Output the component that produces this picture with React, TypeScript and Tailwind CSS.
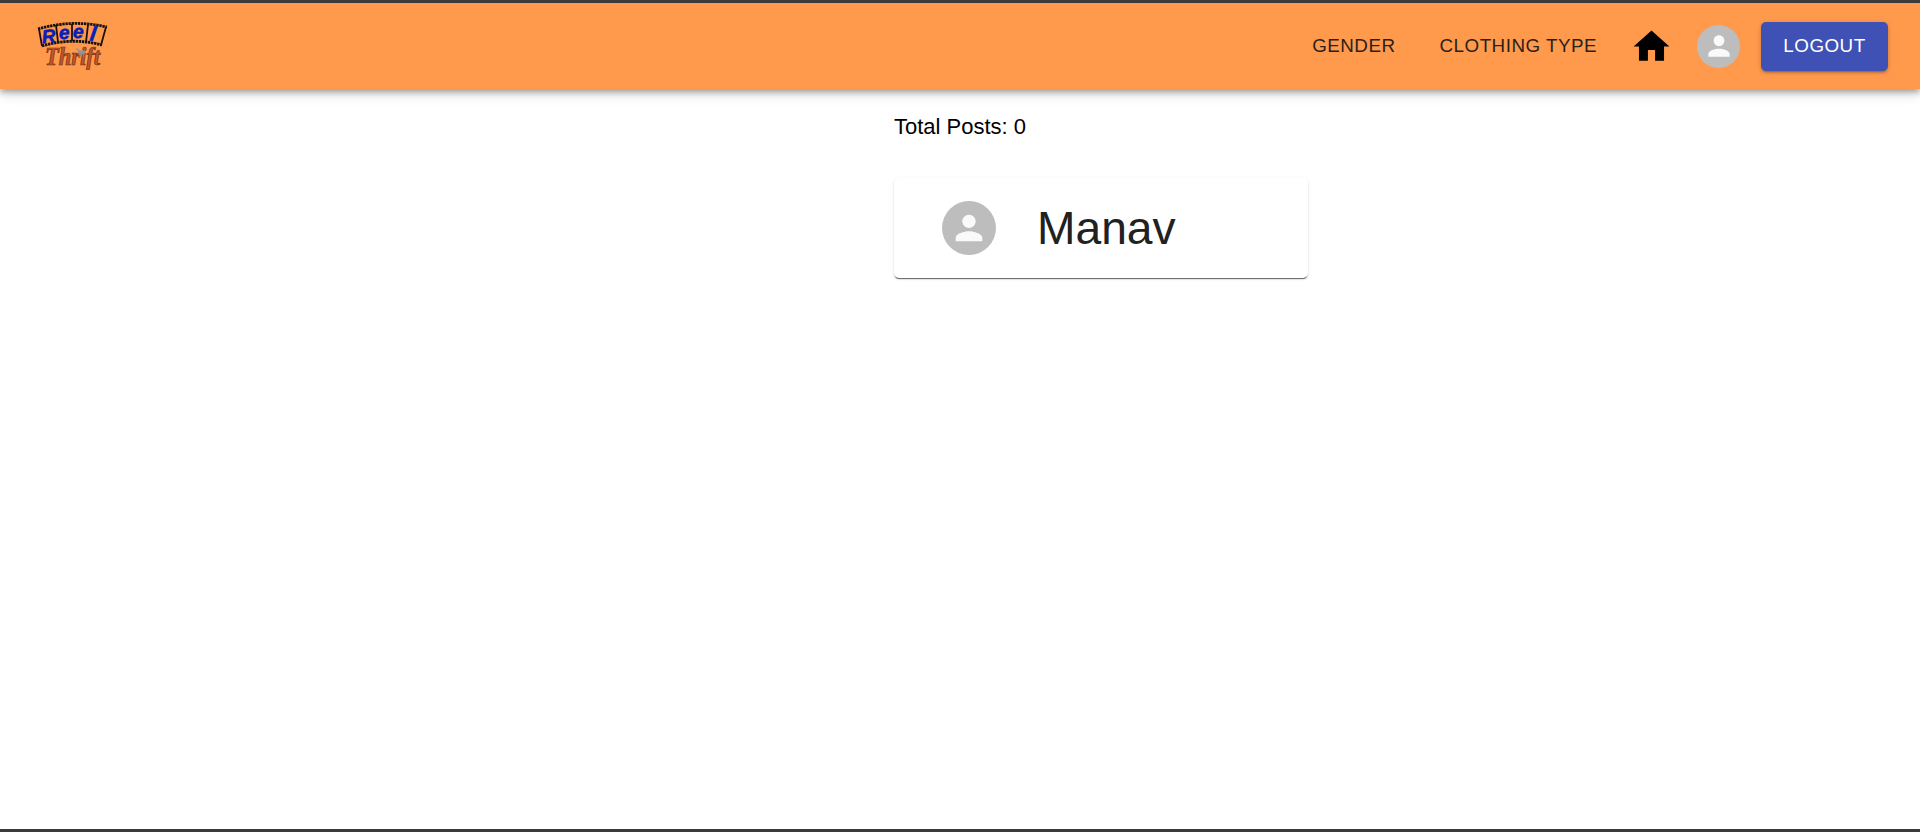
import React from "react";

function Logo() {
  return (
    <svg width="74" height="48" viewBox="36 22 74 48" className="block">
      {/* film strip */}
      <path d="M38 29 Q72 19 107 27" fill="none" stroke="#1a120a" strokeWidth="2.8" strokeDasharray="2.4 0.7" />
      <path d="M42 46 Q72 37 102 45" fill="none" stroke="#1a120a" strokeWidth="2.8" strokeDasharray="2.4 0.7" />
      <path d="M39 29 L42 46 M56 25 L58 42 M72 24 L72 41 M88 25 L86 42 M106 27 L101 45" stroke="#1a120a" strokeWidth="1.8" fill="none" />
      <g fill="#0a1eb8" stroke="#0a1eb8" strokeWidth="0.6" fontFamily="'Liberation Sans', sans-serif" fontStyle="italic" fontWeight="700">
        <text x="42" y="43" fontSize="19" transform="rotate(-6 48 38)">R</text>
        <text x="59" y="39" fontSize="19" transform="rotate(-3 64 35)">e</text>
        <text x="73" y="38" fontSize="19" transform="rotate(3 78 34)">e</text>
        <text x="90" y="41" fontSize="21" transform="rotate(8 94 35)">l</text>
      </g>
      {/* wordmark */}
      <text
        x="45"
        y="65"
        fontSize="25"
        fontFamily="'Liberation Serif', serif"
        fontStyle="italic"
        fontWeight="700"
        textLength="55"
        lengthAdjust="spacingAndGlyphs"
        fill="#c2562a"
        stroke="#6b2c14"
        strokeWidth="0.7"
      >
        Thrift
      </text>
      {/* tiny cart */}
      <path d="M76 49 L78 49 L79 54 L84 54 L85 51 L78.5 51" fill="#8f9398" stroke="#8f9398" strokeWidth="1" />
      <circle cx="79.5" cy="56" r="0.8" fill="#8f9398" />
      <circle cx="83.5" cy="56" r="0.8" fill="#8f9398" />
    </svg>
  );
}

function PersonAvatar({ size, icon }: { size: string; icon: string }) {
  return (
    <div className={`flex items-center justify-center rounded-full bg-[#bdbdbd] shrink-0 ${size}`}>
      <svg viewBox="0 0 24 24" className={`${icon} fill-[#fafafa]`}>
        <path d="M12 12c2.21 0 4-1.79 4-4s-1.79-4-4-4-4 1.79-4 4 1.79 4 4 4zm0 2c-2.67 0-8 1.34-8 4v2h16v-2c0-2.66-5.33-4-8-4z" />
      </svg>
    </div>
  );
}

export default function App() {
  return (
    <div className="h-[832px] flex flex-col bg-white border-y-[3px] border-[#3a3a3a] font-['Liberation_Sans',Arial,sans-serif] overflow-hidden">
      <header className="h-[86px] shrink-0 flex items-center justify-between bg-[#ff9a4d] pl-[36px] pr-[32px] shadow-[0_3px_6px_rgba(0,0,0,0.3),0_5px_12px_rgba(0,0,0,0.14)]">
        <Logo />
        <div className="flex items-center">
          <button className="text-[18.8px] tracking-[0.5px] text-[#2a2119] uppercase">Gender</button>
          <button className="ml-[44px] text-[18.8px] tracking-[0.5px] text-[#2a2119] uppercase">Clothing Type</button>
          <svg viewBox="0 0 24 24" className="ml-[33px] w-[43px] h-[43px] fill-black">
            <path d="M10 20v-6h4v6h5v-8h3L12 3 2 12h3v8z" />
          </svg>
          <div className="ml-[24px]">
            <PersonAvatar size="w-[43px] h-[43px]" icon="w-[32px] h-[32px]" />
          </div>
          <button className="ml-[21px] h-[49px] w-[127px] rounded-[5px] bg-[#3f51b5] text-white text-[18.8px] tracking-[0.5px] uppercase shadow-[0_3px_2px_-2px_rgba(0,0,0,0.2),0_2px_3px_rgba(0,0,0,0.14),0_1px_6px_rgba(0,0,0,0.12)]">
            Logout
          </button>
        </div>
      </header>
      <main className="w-[414px] ml-[894px] pt-[25px]">
        <p className="text-[22px] leading-[25px] text-black">Total Posts: 0</p>
        <div className="mt-[39px] h-[100px] flex items-center pl-[48px] bg-white rounded-[5px] shadow-[0_2px_1px_-1px_rgba(0,0,0,0.5),0_1px_1px_rgba(0,0,0,0.14),0_1px_3px_rgba(0,0,0,0.12)]">
          <PersonAvatar size="w-[54px] h-[54px]" icon="w-[40px] h-[40px]" />
          <span className="ml-[41px] text-[46.2px] leading-none text-[#212121]">Manav</span>
        </div>
      </main>
    </div>
  );
}
